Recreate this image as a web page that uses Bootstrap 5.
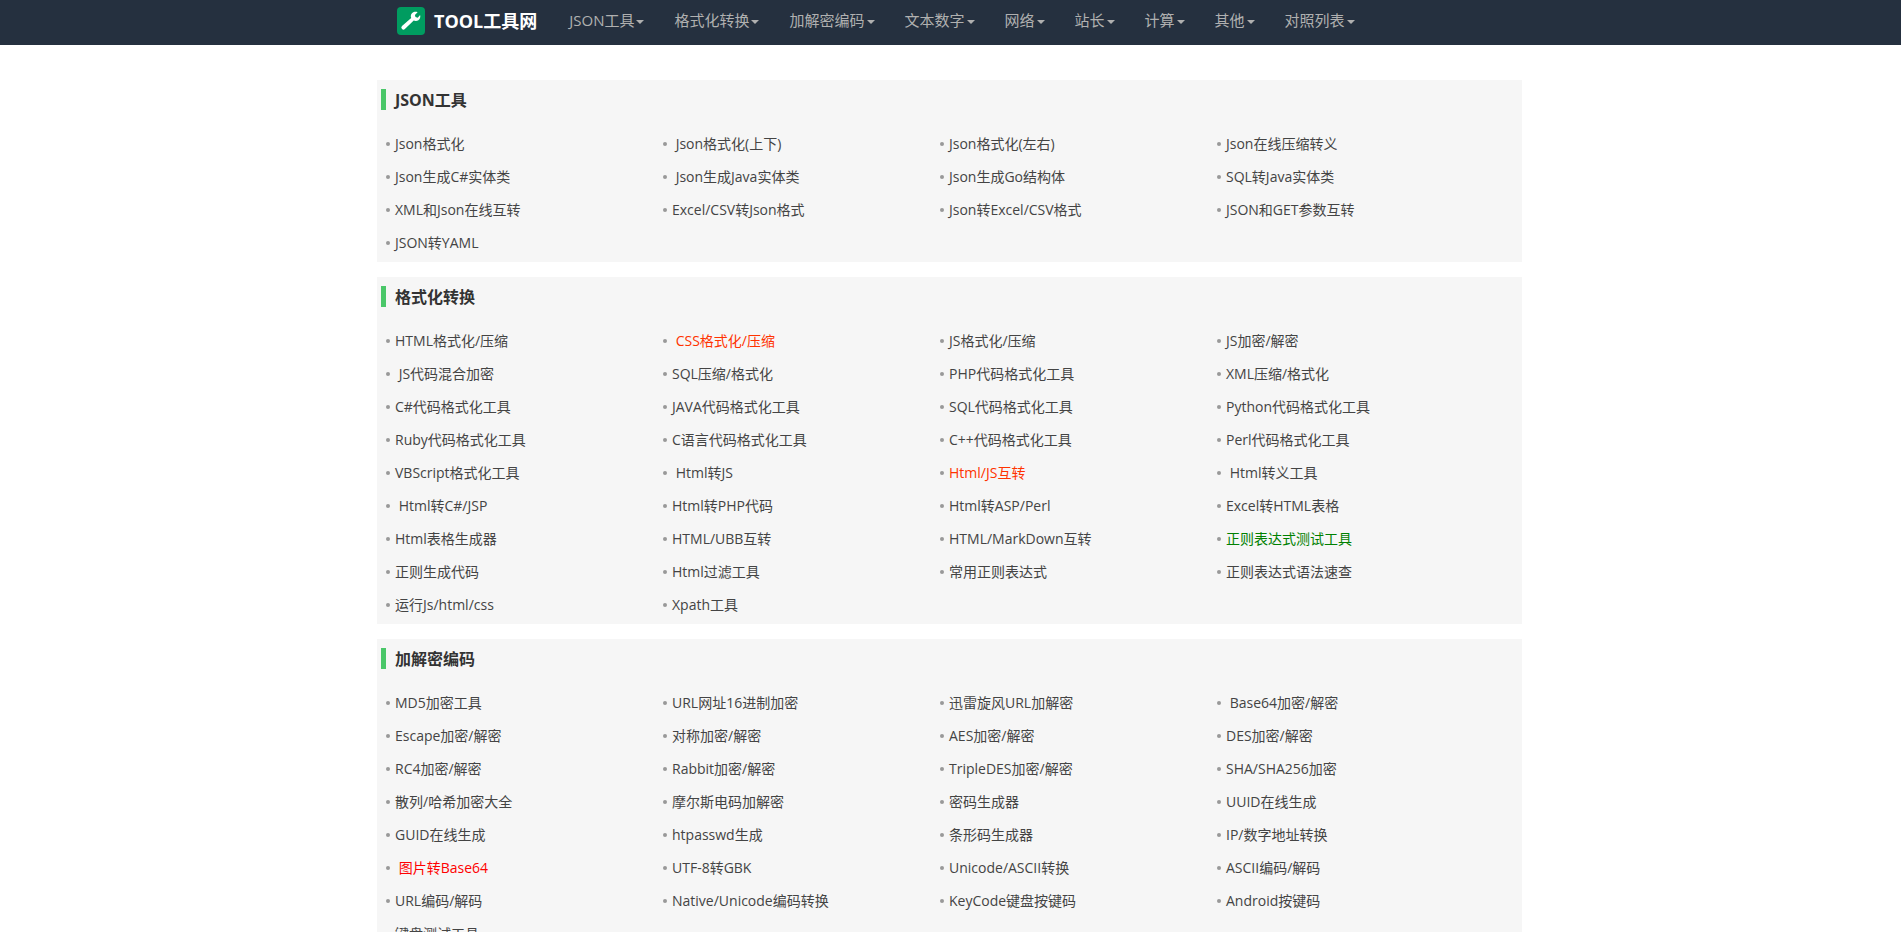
<!DOCTYPE html>
<html lang="zh-CN">
<head>
<meta charset="utf-8">
<meta name="viewport" content="width=device-width, initial-scale=1">
<title>TOOL工具网</title>
<link rel="stylesheet" href="https://cdn.jsdelivr.net/npm/bootstrap@5.3.0/dist/css/bootstrap.min.css">
<style>
body { font-family: "Open Sans", "Noto Sans CJK SC", sans-serif; font-size: 14px; color: #444; background: #fff; }
.site-wrap { max-width: 1147px; }
.site-bar { background: #25303f; min-height: 45px; }
.site-bar .navbar-brand { font-size: 18px; line-height: 28px; font-weight: 700; color: #fff; padding: 7px 0; margin: 0 17px 0 20px; gap: 9px; }
.site-bar .navbar-nav .nav-link { font-size: 15px; line-height: 20px; color: #b0b0b0; padding: 10px 15px 15px; }
.site-bar .navbar-nav .nav-link:hover { color: #fff; }
.site-bar .dropdown-toggle::after { margin-left: 2px; border-width: 4px 4px 0; vertical-align: middle; }
.site-main { padding: 35px 2px 0 0; }
.tool-group { background: #f6f6f6; margin-bottom: 15px; padding: 9px 28px 3px 4px; }
.tool-group h2 { font-size: 16px; line-height: 21px; font-weight: 700; color: #333; border-left: 5px solid #4ac769; padding: 1px 0 0 9px; height: 21px; margin: 0 0 17px; }
.tool-group ul { padding-left: 5px; }
.tool-group li { line-height: 33px; height: 33px; }
.tool-group li::before { content: ""; width: 4px; height: 4px; border-radius: 50%; background: #999; margin-right: 5px; }
.tool-group a { color: #444; text-decoration: none; white-space: nowrap; }
.tool-group a:hover { text-decoration: underline; }
.tool-group a.is-hot { color: #ff3300; }
.tool-group a.is-red { color: #ff0000; }
.tool-group a.is-green { color: #008000; }
</style>
</head>
<body>
<nav class="navbar navbar-expand-lg site-bar p-0" aria-label="主导航">
  <div class="container-fluid site-wrap justify-content-start align-items-start p-0">
    <a class="navbar-brand d-flex" href="#">
      <svg width="28" height="28" viewBox="0 0 28 28" aria-hidden="true">
        <rect width="28" height="28" rx="4" fill="#009c60"/>
        <path fill="#fff" d="M20.6 5.2 17.9 7.9l.6 2.2 2.2.6 2.4-2.6c.6 2.1-.1 4.2-1.7 5.2-1.4.9-3.1 1-4.7.3l-8.8 8.4a2 2 0 0 1-2.9 0 2 2 0 0 1 0-2.9l9.2-8c-.8-1.7-.3-3.7 1-5 1.4-1.3 3.4-1.7 5.4-.9z"/>
      </svg>
      <span>TOOL工具网</span>
    </a>
    <ul class="navbar-nav flex-row flex-wrap">
      <li class="nav-item"><a class="nav-link dropdown-toggle" href="#json">JSON工具</a></li>
      <li class="nav-item"><a class="nav-link dropdown-toggle" href="#format">格式化转换</a></li>
      <li class="nav-item"><a class="nav-link dropdown-toggle" href="#crypto">加解密编码</a></li>
      <li class="nav-item"><a class="nav-link dropdown-toggle" href="#">文本数字</a></li>
      <li class="nav-item"><a class="nav-link dropdown-toggle" href="#">网络</a></li>
      <li class="nav-item"><a class="nav-link dropdown-toggle" href="#">站长</a></li>
      <li class="nav-item"><a class="nav-link dropdown-toggle" href="#">计算</a></li>
      <li class="nav-item"><a class="nav-link dropdown-toggle" href="#">其他</a></li>
      <li class="nav-item"><a class="nav-link dropdown-toggle" href="#">对照列表</a></li>
    </ul>
  </div>
</nav>

<main class="container-fluid site-wrap site-main">
  <section class="tool-group" id="json">
    <h2>JSON工具</h2>
    <ul class="row row-cols-2 row-cols-lg-4 g-0 list-unstyled mb-0">
      <li class="d-flex align-items-center"><a href="#">Json格式化</a></li>
      <li class="d-flex align-items-center"><a href="#">&nbsp;Json格式化(上下)</a></li>
      <li class="d-flex align-items-center"><a href="#">Json格式化(左右)</a></li>
      <li class="d-flex align-items-center"><a href="#">Json在线压缩转义</a></li>
      <li class="d-flex align-items-center"><a href="#">Json生成C#实体类</a></li>
      <li class="d-flex align-items-center"><a href="#">&nbsp;Json生成Java实体类</a></li>
      <li class="d-flex align-items-center"><a href="#">Json生成Go结构体</a></li>
      <li class="d-flex align-items-center"><a href="#">SQL转Java实体类</a></li>
      <li class="d-flex align-items-center"><a href="#">XML和Json在线互转</a></li>
      <li class="d-flex align-items-center"><a href="#">Excel/CSV转Json格式</a></li>
      <li class="d-flex align-items-center"><a href="#">Json转Excel/CSV格式</a></li>
      <li class="d-flex align-items-center"><a href="#">JSON和GET参数互转</a></li>
      <li class="d-flex align-items-center"><a href="#">JSON转YAML</a></li>
    </ul>
  </section>

  <section class="tool-group" id="format">
    <h2>格式化转换</h2>
    <ul class="row row-cols-2 row-cols-lg-4 g-0 list-unstyled mb-0">
      <li class="d-flex align-items-center"><a href="#">HTML格式化/压缩</a></li>
      <li class="d-flex align-items-center"><a class="is-hot" href="#">&nbsp;CSS格式化/压缩</a></li>
      <li class="d-flex align-items-center"><a href="#">JS格式化/压缩</a></li>
      <li class="d-flex align-items-center"><a href="#">JS加密/解密</a></li>
      <li class="d-flex align-items-center"><a href="#">&nbsp;JS代码混合加密</a></li>
      <li class="d-flex align-items-center"><a href="#">SQL压缩/格式化</a></li>
      <li class="d-flex align-items-center"><a href="#">PHP代码格式化工具</a></li>
      <li class="d-flex align-items-center"><a href="#">XML压缩/格式化</a></li>
      <li class="d-flex align-items-center"><a href="#">C#代码格式化工具</a></li>
      <li class="d-flex align-items-center"><a href="#">JAVA代码格式化工具</a></li>
      <li class="d-flex align-items-center"><a href="#">SQL代码格式化工具</a></li>
      <li class="d-flex align-items-center"><a href="#">Python代码格式化工具</a></li>
      <li class="d-flex align-items-center"><a href="#">Ruby代码格式化工具</a></li>
      <li class="d-flex align-items-center"><a href="#">C语言代码格式化工具</a></li>
      <li class="d-flex align-items-center"><a href="#">C++代码格式化工具</a></li>
      <li class="d-flex align-items-center"><a href="#">Perl代码格式化工具</a></li>
      <li class="d-flex align-items-center"><a href="#">VBScript格式化工具</a></li>
      <li class="d-flex align-items-center"><a href="#">&nbsp;Html转JS</a></li>
      <li class="d-flex align-items-center"><a class="is-hot" href="#">Html/JS互转</a></li>
      <li class="d-flex align-items-center"><a href="#">&nbsp;Html转义工具</a></li>
      <li class="d-flex align-items-center"><a href="#">&nbsp;Html转C#/JSP</a></li>
      <li class="d-flex align-items-center"><a href="#">Html转PHP代码</a></li>
      <li class="d-flex align-items-center"><a href="#">Html转ASP/Perl</a></li>
      <li class="d-flex align-items-center"><a href="#">Excel转HTML表格</a></li>
      <li class="d-flex align-items-center"><a href="#">Html表格生成器</a></li>
      <li class="d-flex align-items-center"><a href="#">HTML/UBB互转</a></li>
      <li class="d-flex align-items-center"><a href="#">HTML/MarkDown互转</a></li>
      <li class="d-flex align-items-center"><a class="is-green" href="#">正则表达式测试工具</a></li>
      <li class="d-flex align-items-center"><a href="#">正则生成代码</a></li>
      <li class="d-flex align-items-center"><a href="#">Html过滤工具</a></li>
      <li class="d-flex align-items-center"><a href="#">常用正则表达式</a></li>
      <li class="d-flex align-items-center"><a href="#">正则表达式语法速查</a></li>
      <li class="d-flex align-items-center"><a href="#">运行Js/html/css</a></li>
      <li class="d-flex align-items-center"><a href="#">Xpath工具</a></li>
    </ul>
  </section>

  <section class="tool-group" id="crypto">
    <h2>加解密编码</h2>
    <ul class="row row-cols-2 row-cols-lg-4 g-0 list-unstyled mb-0">
      <li class="d-flex align-items-center"><a href="#">MD5加密工具</a></li>
      <li class="d-flex align-items-center"><a href="#">URL网址16进制加密</a></li>
      <li class="d-flex align-items-center"><a href="#">迅雷旋风URL加解密</a></li>
      <li class="d-flex align-items-center"><a href="#">&nbsp;Base64加密/解密</a></li>
      <li class="d-flex align-items-center"><a href="#">Escape加密/解密</a></li>
      <li class="d-flex align-items-center"><a href="#">对称加密/解密</a></li>
      <li class="d-flex align-items-center"><a href="#">AES加密/解密</a></li>
      <li class="d-flex align-items-center"><a href="#">DES加密/解密</a></li>
      <li class="d-flex align-items-center"><a href="#">RC4加密/解密</a></li>
      <li class="d-flex align-items-center"><a href="#">Rabbit加密/解密</a></li>
      <li class="d-flex align-items-center"><a href="#">TripleDES加密/解密</a></li>
      <li class="d-flex align-items-center"><a href="#">SHA/SHA256加密</a></li>
      <li class="d-flex align-items-center"><a href="#">散列/哈希加密大全</a></li>
      <li class="d-flex align-items-center"><a href="#">摩尔斯电码加解密</a></li>
      <li class="d-flex align-items-center"><a href="#">密码生成器</a></li>
      <li class="d-flex align-items-center"><a href="#">UUID在线生成</a></li>
      <li class="d-flex align-items-center"><a href="#">GUID在线生成</a></li>
      <li class="d-flex align-items-center"><a href="#">htpasswd生成</a></li>
      <li class="d-flex align-items-center"><a href="#">条形码生成器</a></li>
      <li class="d-flex align-items-center"><a href="#">IP/数字地址转换</a></li>
      <li class="d-flex align-items-center"><a class="is-red" href="#">&nbsp;图片转Base64</a></li>
      <li class="d-flex align-items-center"><a href="#">UTF-8转GBK</a></li>
      <li class="d-flex align-items-center"><a href="#">Unicode/ASCII转换</a></li>
      <li class="d-flex align-items-center"><a href="#">ASCII编码/解码</a></li>
      <li class="d-flex align-items-center"><a href="#">URL编码/解码</a></li>
      <li class="d-flex align-items-center"><a href="#">Native/Unicode编码转换</a></li>
      <li class="d-flex align-items-center"><a href="#">KeyCode键盘按键码</a></li>
      <li class="d-flex align-items-center"><a href="#">Android按键码</a></li>
      <li class="d-flex align-items-center"><a href="#">键盘测试工具</a></li>
    </ul>
  </section>
</main>
<script src="https://cdn.jsdelivr.net/npm/bootstrap@5.3.0/dist/js/bootstrap.bundle.min.js"></script>
</body>
</html>
